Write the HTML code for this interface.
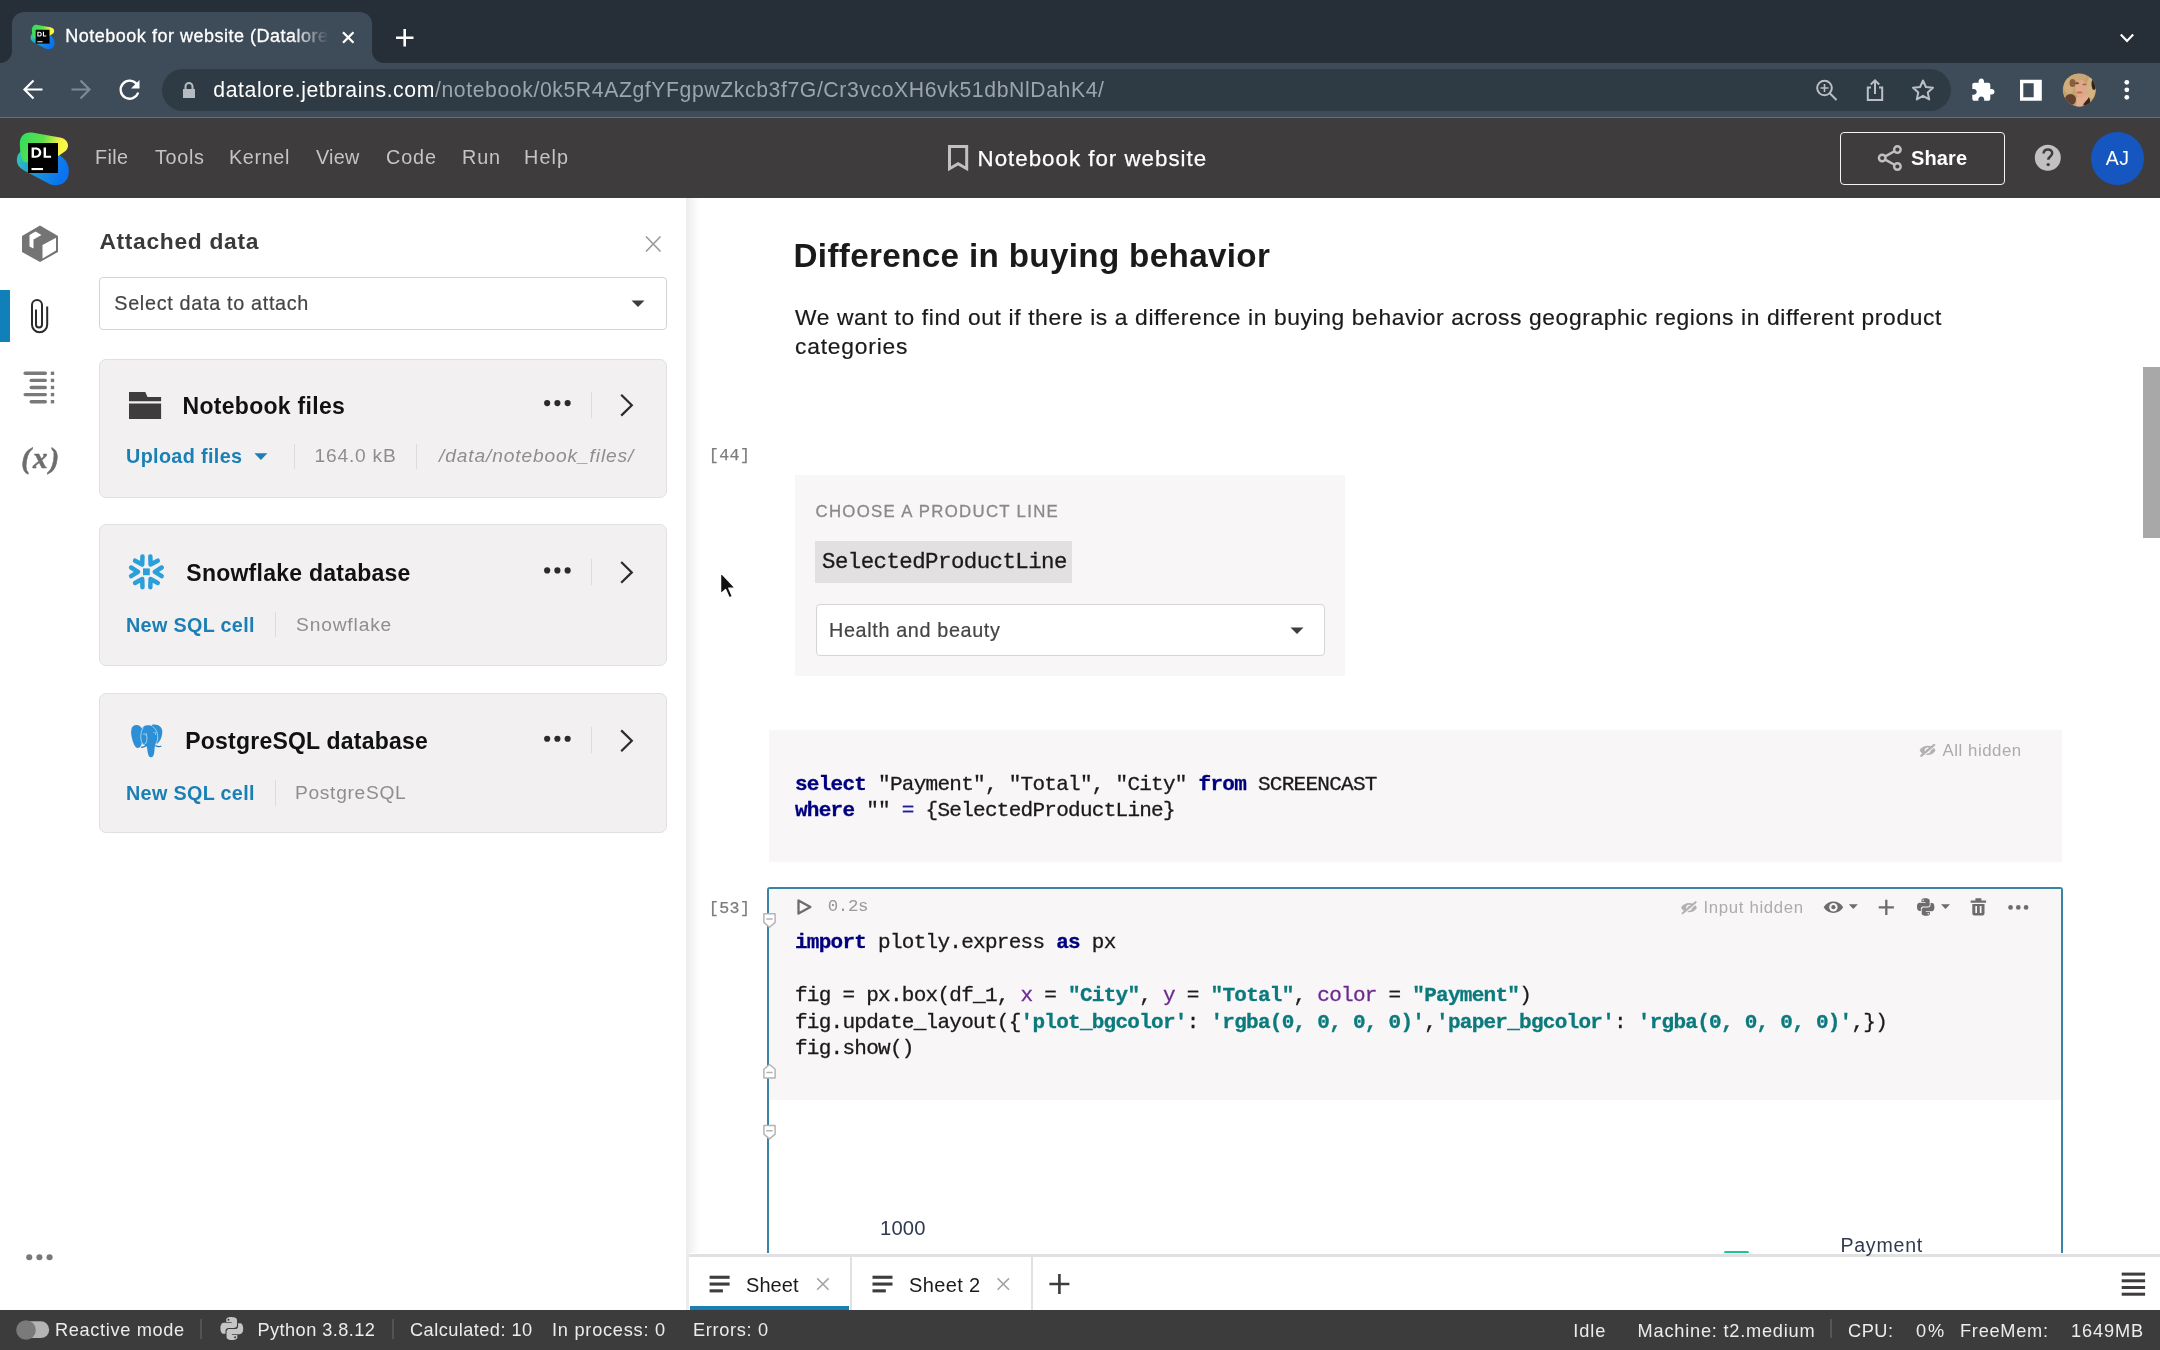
<!DOCTYPE html>
<html><head><meta charset="utf-8"><title>Notebook for website (Datalore)</title>
<style>
*{box-sizing:border-box;margin:0;padding:0}
html,body{width:2160px;height:1350px;overflow:hidden;background:#fff;font-family:"Liberation Sans",sans-serif}
#root{will-change:transform;position:relative;width:2160px;height:1350px;overflow:hidden;background:#fff}
.a{position:absolute}
.t{position:absolute;white-space:nowrap}
svg{position:absolute;overflow:visible}
</style></head><body><div id="root">
<!-- browser chrome -->
<div class="a" style="left:0;top:0;width:2160px;height:63px;background:#262f37"></div>
<div class="a" style="left:0;top:63px;width:2160px;height:55px;background:#3e4b58"></div>
<div class="a" style="left:0;top:116.6px;width:2160px;height:1.6px;background:#686e76"></div>
<div class="a" style="left:12px;top:12px;width:360px;height:52px;background:#3e4b58;border-radius:12px 12px 0 0"></div>
<div class="a" style="left:0;top:51px;width:12px;height:12px;background:radial-gradient(circle at 0 0,#262f37 11.5px,#3e4b58 12.5px)"></div>
<div class="a" style="left:372px;top:51px;width:12px;height:12px;background:radial-gradient(circle at 100% 0,#262f37 11.5px,#3e4b58 12.5px)"></div>
<div class="a" style="left:162px;top:69px;width:1789px;height:42px;background:#2f3b44;border-radius:21px"></div>
<!-- app header -->
<div class="a" style="left:0;top:118px;width:2160px;height:80px;background:#3e3c3d"></div>
<div class="a" style="left:1839.6px;top:131.8px;width:165.4px;height:52.8px;border:1.7px solid #f4f4f4;border-radius:4px"></div>
<div class="a" style="left:2090.8px;top:131.8px;width:52.8px;height:52.8px;border-radius:50%;background:#1556c0"></div>
<!-- left strip -->
<div class="a" style="left:0;top:290px;width:9.8px;height:52.4px;background:#1180b8"></div>
<!-- panel shadow divider -->
<div class="a" style="left:686px;top:198px;width:14px;height:1112px;background:linear-gradient(90deg,#ececec 0,#f6f6f6 50%,#fff 100%)"></div>
<!-- select data -->
<div class="a" style="left:99px;top:277px;width:568px;height:53px;border:1.5px solid #d4d3d4;border-radius:4px;background:#fff"></div>
<!-- cards -->
<div class="a" style="left:99px;top:359.2px;width:567.8px;height:138.6px;border:1.6px solid #e1e0e1;border-radius:7px;background:#f2f0f1"></div>
<div class="a" style="left:99px;top:524.3px;width:567.8px;height:141.3px;border:1.6px solid #e1e0e1;border-radius:7px;background:#f2f0f1"></div>
<div class="a" style="left:99px;top:692.6px;width:567.8px;height:140.9px;border:1.6px solid #e1e0e1;border-radius:7px;background:#f2f0f1"></div>
<!-- card dividers -->
<div class="a" style="left:591.2px;top:392px;width:1.3px;height:26px;background:#dddcdd"></div>
<div class="a" style="left:591.2px;top:559px;width:1.3px;height:26px;background:#dddcdd"></div>
<div class="a" style="left:591.2px;top:727.4px;width:1.3px;height:26px;background:#dddcdd"></div>
<div class="a" style="left:293.9px;top:443.5px;width:1.3px;height:25px;background:#dddcdd"></div>
<div class="a" style="left:416.1px;top:443.5px;width:1.3px;height:25px;background:#dddcdd"></div>
<div class="a" style="left:274.7px;top:611.7px;width:1.3px;height:25.7px;background:#dddcdd"></div>
<div class="a" style="left:274.7px;top:780px;width:1.3px;height:25.7px;background:#dddcdd"></div>
<!-- main: control box -->
<div class="a" style="left:795px;top:475px;width:550px;height:201px;background:#f8f6f7"></div>
<div class="a" style="left:815px;top:541px;width:257px;height:42.4px;background:#e2e0e1"></div>
<div class="a" style="left:815.8px;top:604px;width:509px;height:51.6px;border:1.5px solid #d6d5d6;border-radius:4px;background:#fff"></div>
<!-- sql cell -->
<div class="a" style="left:769px;top:730px;width:1293px;height:132px;background:#f8f6f7"></div>
<!-- python cell -->
<div class="a" style="left:767.3px;top:887.3px;width:1295.4px;height:400px;border:2.1px solid #3785a3;border-radius:3px 3px 0 0;background:#fff"></div>
<div class="a" style="left:769.4px;top:889.4px;width:1291.2px;height:210.6px;background:#f8f6f7"></div>
<!-- scrollbar -->
<div class="a" style="left:2143px;top:367px;width:17px;height:171px;background:#a9a8a9"></div>
<!-- plot bits -->
<div class="a" style="left:1724.2px;top:1250.6px;width:24.4px;height:3.4px;border-radius:1.5px 1.5px 0 0;background:#1cc597"></div>
<!-- sheet tabs -->
<div class="a" style="left:686px;top:1253px;width:1474px;height:57px;background:#fff"></div>
<div class="a" style="left:686px;top:1253.8px;width:1474px;height:3px;background:#e2e1e2"></div>
<div class="a" style="left:686px;top:1253px;width:3px;height:57px;background:#ececec"></div>
<div class="a" style="left:850.2px;top:1256px;width:2.2px;height:54px;background:#e2e1e2"></div>
<div class="a" style="left:1030.6px;top:1256px;width:2.2px;height:54px;background:#e2e1e2"></div>
<div class="a" style="left:690px;top:1306px;width:159px;height:4px;background:#1a7fb5"></div>
<!-- status bar -->
<div class="a" style="left:0;top:1310px;width:2160px;height:40px;background:#3d3c3d"></div>
<div class="a" style="left:200.4px;top:1318.5px;width:1.5px;height:20px;background:#545355"></div>
<div class="a" style="left:392.2px;top:1318.5px;width:1.5px;height:20px;background:#545355"></div>
<div class="a" style="left:1830px;top:1318.8px;width:1.6px;height:19.6px;background:#565557"></div>
<!--ICONS_START-->
<svg width="2160" height="1350" viewBox="0 0 2160 1350" style="left:0;top:0">
<defs>
<linearGradient id="gTop" x1="0" y1="0" x2="1" y2="0.25"><stop offset="0" stop-color="#2fdc5e"/><stop offset="0.5" stop-color="#5de04e"/><stop offset="0.85" stop-color="#f6f040"/><stop offset="1" stop-color="#fcf84a"/></linearGradient>
<linearGradient id="gBot" x1="0" y1="0" x2="1" y2="0.3"><stop offset="0" stop-color="#35c9b5"/><stop offset="0.45" stop-color="#1b9ad8"/><stop offset="1" stop-color="#0b73f0"/></linearGradient>
<g id="dl">
<path d="M17.5,156 C15.8,162 17.5,167 24,170.5 L50,184.3 C58,186.8 66,184 68.2,176 C70,168 67.5,161 62,157 L52,150 L27,150 C22,150 19,152 17.5,156 Z" fill="url(#gBot)"/>
<path d="M19.8,144 C19.5,136 25,131.5 32,132.6 L60,137.6 C68,139 70.5,147 65.5,151 L47,164 L24,162 C20.5,158 20,150 19.8,144 Z" fill="url(#gTop)"/>
<rect x="28" y="143" width="30" height="30" fill="#000"/>
<path d="M31.6,147.4h4.1c3.4,0 5.6,2.2 5.6,5.2 0,3 -2.2,5.2 -5.6,5.2h-4.1z M34,149.5v6.2h1.7c1.9,0 3.2,-1.2 3.2,-3.1 0,-1.9 -1.3,-3.1 -3.2,-3.1z M43.6,147.4h2.4v8.3h5.1v2.1h-7.5z" fill="#fff" fill-rule="evenodd"/>
<rect x="31.5" y="168" width="11.5" height="2.1" fill="#fff"/>
</g>
<g id="dots3"><circle cx="-8" cy="0" r="2.4"/><circle cx="0" cy="0" r="2.4"/><circle cx="8" cy="0" r="2.4"/></g>
<path id="py" d="M-0.2,-8.8c-4.3,0 -4,1.9 -4,1.9v2h4.1v0.6h-5.8s-2.8,-0.3 -2.8,4.1c0,4.4 2.4,4.2 2.4,4.2h1.5v-2s-0.1,-2.4 2.4,-2.4h4.1s2.3,0 2.3,-2.2v-3.7s0.4,-2.5 -4.2,-2.5z M-2.5,-7.5a0.75,0.75 0 1 1 0,1.5a0.75,0.75 0 1 1 0,-1.5z M0.2,8.8c4.3,0 4,-1.9 4,-1.9v-2h-4.1v-0.6h5.8s2.8,0.3 2.8,-4.1c0,-4.4 -2.4,-4.2 -2.4,-4.2h-1.5v2s0.1,2.4 -2.4,2.4h-4.1s-2.3,0 -2.3,2.2v3.7s-0.4,2.5 4.2,2.5z M2.5,7.5a0.75,0.75 0 1 1 0,-1.5a0.75,0.75 0 1 1 0,1.5z" fill-rule="evenodd"/>
</defs>
<!-- ===== browser chrome icons ===== -->
<use href="#dl" transform="translate(30.6,24.2) scale(0.462) translate(-17,-131)"/>
<g stroke="#fff" stroke-width="2.2" fill="none" stroke-linecap="butt">
<path d="M343,32.3 L353.5,42.8 M353.5,32.3 L343,42.8" stroke-width="2.3"/>
<path d="M396,37.7 H413.5 M404.7,29 V46.5" stroke-width="2.6"/>
<path d="M2120.8,34.6 L2127,40.9 L2133.2,34.6" stroke-width="2.2"/>
<path d="M42.5,89.5 H25 M33.5,80.5 L24.5,89.5 L33.5,98.5" />
<path d="M71.5,89.5 H89 M80.5,80.5 L89.5,89.5 L80.5,98.5" stroke="#7d8a95"/>
<path d="M137,84.5 A9,9 0 1 0 138.2,92.5" stroke-width="2.3"/>
</g>
<path d="M139.5,80 V88.5 H131 Z" fill="#fff"/>
<!-- lock -->
<path d="M183,89 h12 v9 h-12z" fill="#b5bbc1"/>
<path d="M185.5,89 v-2.5 a3.5,3.5 0 0 1 7,0 V89" fill="none" stroke="#b5bbc1" stroke-width="2"/>
<!-- zoom -->
<g stroke="#b9bfc5" stroke-width="2" fill="none">
<circle cx="1824.5" cy="88" r="7.3"/><path d="M1830,93.5 L1836.5,100"/><path d="M1820.5,88 h8 M1824.5,84 v8" stroke-width="1.6"/>
<!-- share -->
<path d="M1871,87.5 h-3.2 v12.5 h14.4 v-12.5 h-3.2"/><path d="M1875,94 V80.5 M1870.8,84.5 L1875,80.3 L1879.2,84.5"/>
<!-- star -->
<path d="M1923,80.5 L1925.9,87 L1933,87.7 L1927.7,92.4 L1929.2,99.4 L1923,95.8 L1916.8,99.4 L1918.3,92.4 L1913,87.7 L1920.1,87 Z" stroke-linejoin="round"/>
</g>
<!-- puzzle -->
<path transform="translate(1.3,-0.4)" d="M1990.5,89.5h-1.5v-4.2c0,-1.2 -0.9,-2.1 -2.1,-2.1h-4.2v-1.5c0,-1.5 -1.2,-2.7 -2.7,-2.7s-2.7,1.2 -2.7,2.7v1.5h-4.2c-1.2,0 -2.1,0.9 -2.1,2.1v4h1.5c1.6,0 2.9,1.3 2.9,2.9s-1.3,2.9 -2.9,2.9h-1.5v4c0,1.2 0.9,2.1 2.1,2.1h4v-1.5c0,-1.6 1.3,-2.9 2.9,-2.9s2.9,1.3 2.9,2.9v1.5h4c1.2,0 2.1,-0.9 2.1,-2.1v-4.2h1.5c1.5,0 2.7,-1.2 2.7,-2.7s-1.2,-2.7 -2.7,-2.7z" fill="#fff"/>
<!-- side panel -->
<path d="M2020,79.8h21.8v21h-21.8z M2023.3,83.3v14h10.4v-14z" fill="#fff" fill-rule="evenodd"/>
<!-- avatar -->
<clipPath id="avc"><circle cx="2079.3" cy="90" r="16.6"/></clipPath>
<g clip-path="url(#avc)">
<circle cx="2079.3" cy="90" r="17" fill="#c3a06c"/>
<ellipse cx="2069" cy="86" rx="5" ry="8" fill="#cfae7c"/>
<ellipse cx="2091" cy="88" rx="4.5" ry="11" fill="#d2b482"/>
<ellipse cx="2078" cy="77.5" rx="9" ry="4" fill="#c9a777"/>
<ellipse cx="2094" cy="84" rx="2.5" ry="6" fill="#2c241e"/>
<ellipse cx="2072.5" cy="83" rx="3" ry="4" fill="#8a5e40"/>
<ellipse cx="2081.2" cy="88.8" rx="6.2" ry="9" fill="#dfa88b"/>
<ellipse cx="2077" cy="83.2" rx="2.2" ry="1" fill="#7a4a30"/>
<ellipse cx="2084.5" cy="84.4" rx="2.2" ry="0.9" fill="#9a6a50"/>
<ellipse cx="2079.5" cy="92.6" rx="3.2" ry="1" fill="#c26a58"/>
<ellipse cx="2070.5" cy="99.5" rx="5.5" ry="5.5" fill="#63402f"/>
<ellipse cx="2086.5" cy="101.5" rx="3.6" ry="5.5" fill="#3a2318"/>
<path d="M2077,96 C2080,99 2085,97 2087,93 L2089,97 C2087,101 2083,103 2081,108 L2076,108 C2077,103 2076,100 2077,96Z" fill="#e2ad91"/>
<path d="M2063,96 C2066,103 2072,107 2082,107.5 L2082,110 L2060,110Z" fill="#e9e4df"/>
</g>
<!-- kebab -->
<g fill="#fff"><circle cx="2126.8" cy="82.3" r="2.4"/><circle cx="2126.8" cy="89.8" r="2.4"/><circle cx="2126.8" cy="97.3" r="2.4"/></g>
<!-- ===== app header ===== -->
<use href="#dl"/>
<path d="M949.5,146.5 h17.2 v22.2 l-8.6,-5 l-8.6,5 z" fill="none" stroke="#c2c1c2" stroke-width="3"/>
<g stroke="#c2c1c2" stroke-width="2.4" fill="none"><circle cx="1897.4" cy="149.6" r="3.3"/><circle cx="1882.2" cy="158" r="3.3"/><circle cx="1897.4" cy="166.5" r="3.3"/><path d="M1885.2,156.4 L1894.4,151.3 M1885.2,159.6 L1894.4,164.8"/></g>
<circle cx="2047.8" cy="157.8" r="13" fill="#c2c1c2"/>
<path d="M2043.6,153.6 c0,-2.6 1.9,-4.2 4.3,-4.2 c2.5,0 4.3,1.6 4.3,3.8 c0,3.2 -3.9,3.4 -3.9,6.6" fill="none" stroke="#3e3c3d" stroke-width="2.5"/><circle cx="2048.2" cy="164.6" r="1.7" fill="#3e3c3d"/>
<!-- ===== left strip ===== -->
<path d="M40,225.5 L58,236 V252 L40,262 L22,252 V236 Z" fill="#757475"/>
<path d="M42.5,245 L56,237.8 V250.6 L42.5,258.5 Z" fill="#fff"/>
<path d="M35.5,231.5 L41.5,235 L33.5,239.5 V248.5 L29.5,246.5 V235 Z" fill="#fff"/>
<path d="M36,309.5 V324.5 a3,3 0 0 0 6,0 V305 a5,5 0 0 0 -10,0 V324.7 a7.6,7.6 0 0 0 15.2,0 V306.5" fill="none" stroke="#2b2b2b" stroke-width="2"/>
<g fill="#7a797a"><rect x="23.5" y="371.6" width="23.5" height="3.4" rx="1.7"/><rect x="29.5" y="378.7" width="17.5" height="3.4" rx="1.7"/><rect x="29.5" y="385.8" width="17.5" height="3.4" rx="1.7"/><rect x="23.5" y="392.9" width="23.5" height="3.4" rx="1.7"/><rect x="29.5" y="400" width="17.5" height="3.4" rx="1.7"/>
<rect x="50.8" y="371.6" width="3.4" height="3.4"/><rect x="50.8" y="378.7" width="3.4" height="3.4"/><rect x="50.8" y="385.8" width="3.4" height="3.4"/><rect x="50.8" y="392.9" width="3.4" height="3.4"/><rect x="50.8" y="400" width="3.4" height="3.4"/></g>
<use href="#dots3" transform="translate(39.4,1257.3) scale(1.27)" fill="#7a797a"/>
<!-- ===== panel ===== -->
<path d="M646,236.5 L660.5,251.5 M660.5,236.5 L646,251.5" stroke="#9a999a" stroke-width="1.6" fill="none"/>
<path d="M631.5,300.5 h13 l-6.5,6.5z" fill="#3e3c3d"/>
<path d="M129,392 h16.3 l2.2,5 h13.6 v4.2 h-32.1z M129,403.5 h32.1 v15.4 h-32.1z" fill="#3e3c3d"/>
<g fill="#2b2b2b"><use href="#dots3" transform="translate(557.4,403.1) scale(1.28)"/><use href="#dots3" transform="translate(557.4,570.4) scale(1.28)"/><use href="#dots3" transform="translate(557.4,738.8) scale(1.28)"/></g>
<g fill="none" stroke="#2b2b2b" stroke-width="2.2"><path d="M621.2,394.8 L631.8,405.2 L621.2,415.6"/><path d="M621.2,562 L631.8,572.4 L621.2,582.8"/><path d="M621.2,730.4 L631.8,740.8 L621.2,751.2"/></g>
<path d="M254.4,453.2 h13 l-6.5,6.8z" fill="#1a7fb5"/>
<!-- snowflake -->
<g id="snow" transform="translate(146.4,571.8)" stroke="#2b9fd9" stroke-width="4.5" stroke-linecap="round" stroke-linejoin="round" fill="none">
<rect x="-3.4" y="-3.4" width="6.8" height="6.8" fill="#2b9fd9" stroke="none"/>
<g id="sa"><path d="M15.3,-4.3 L8.4,0 L15.3,4.3"/></g>
<use href="#sa" transform="rotate(60)"/><use href="#sa" transform="rotate(120)"/><use href="#sa" transform="rotate(180)"/><use href="#sa" transform="rotate(240)"/><use href="#sa" transform="rotate(300)"/>
</g>
<!-- postgres elephant -->
<g fill="#2d8fd5">
<path d="M136.5,725 C131,725 130.3,731 131.8,737.5 C133.3,743.5 135,748 137.8,748 C140.5,748 142.5,744 142.5,738 V730 C141.5,727 139.5,725 136.5,725 Z"/>
<path d="M152,724.8 C158,723.5 162.6,727 162.3,732.5 C162,737.5 160,741.5 157,744 L153,735 Z"/>
<path d="M147.5,725.2 C142,725.2 139.6,731 140,737 C140.4,741.5 142,744.3 145,745.3 C147,746 147.2,748 147.5,751 C148,755 149,757.3 151,757.3 C153,757.3 154.1,755 154.4,751 C154.7,747 155,744.5 156.5,742.2 C158.3,739.5 158.8,735 157.6,731 C156.5,727.3 152.5,725.2 147.5,725.2 Z"/>
</g>
<g fill="none" stroke="#9ad6f7" stroke-width="1"><path d="M143.5,727.5 C140.5,731 140,738 142,743.5 C143.5,744.8 145,744.8 146,743 C147.3,740 147.3,735 145.8,733"/><path d="M152.5,726.5 C156.5,729 158.3,734 157.6,739 C157.2,741.5 156.3,743.5 155.5,744.5"/><path d="M153.5,732.5 C155,731.5 156.5,733 155.5,735"/><path d="M142.8,734.5 C143.8,733.2 145.5,733.8 145.3,735.5"/></g>
<g stroke="#2a78b5" stroke-width="1.3" fill="none"><path d="M141,747.3 C143,747.3 145,746.5 146.3,745.2"/><path d="M155.5,745.5 C157.5,746.8 159.5,746.8 161.3,746"/></g>
<!-- ===== main ===== -->
<path d="M1290.5,627.5 h13 l-6.5,6.5z" fill="#3e3c3d"/>
<!-- mouse cursor -->
<path d="M720.6,572.5 V594 L725.6,589.4 L729.2,597.8 L732.4,596.4 L728.8,588.2 L735.2,588 Z" fill="#111" stroke="#fff" stroke-width="1.3" stroke-linejoin="round"/>
<!-- eye-slash: All hidden / Input hidden -->
<g id="es1" transform="translate(1927.6,750.4)"><path d="M-8,0 C-4.5,-6.2 4.5,-6.2 8,0 C4.5,6.2 -4.5,6.2 -8,0Z" fill="#b3b2b3"/><circle r="2.9" fill="#f8f6f7"/><circle r="1.4" fill="#b3b2b3"/><path d="M-5.2,6.2 L8,-4.9" stroke="#f8f6f7" stroke-width="1.6" fill="none"/><path d="M-6.4,5.5 L6.6,-5.5" stroke="#b3b2b3" stroke-width="2.1" fill="none" stroke-linecap="round"/></g>
<use href="#es1" transform="translate(-238.6,157.3)"/>
<!-- run -->
<path d="M798.5,900.4 L810.4,907 L798.5,913.6 Z" fill="none" stroke="#6e6d6e" stroke-width="2.3" stroke-linejoin="round"/>
<!-- eye -->
<g transform="translate(1833.4,907.2)"><path d="M-9.8,0 C-5.5,-7.6 5.5,-7.6 9.8,0 C5.5,7.6 -5.5,7.6 -9.8,0Z" fill="#6e6d6e"/><circle r="4.2" fill="#f8f6f7"/><circle r="2.1" fill="#6e6d6e"/></g>
<path d="M1848.8,904.3 h9 l-4.5,4.8z M1941,904.3 h9 l-4.5,4.8z" fill="#6e6d6e"/>
<path d="M1878.7,907.4 h15.2 M1886.3,899.8 v15.2" stroke="#6e6d6e" stroke-width="2.3" fill="none"/>
<use href="#py" transform="translate(1925.7,907)" fill="#6e6d6e"/>
<path d="M1970.7,900.5 h15.4 v2.2 h-15.4z M1975.4,898.3 h6 v2.2 h-6z M1972.3,904 h12.2 v9.4 a2,2 0 0 1 -2,2 h-8.2 a2,2 0 0 1 -2,-2z M1975.3,906 v7 h1.7 v-7z M1979.8,906 v7 h1.7 v-7z" fill="#6e6d6e" fill-rule="evenodd"/>
<use href="#dots3" transform="translate(2018.3,907.4) scale(0.97)" fill="#6e6d6e"/>
<!-- fold markers -->
<g fill="#fff" stroke="#b5b4b5" stroke-width="1.5" stroke-linejoin="round"><path d="M763.9,913.7 h11.2 v8.7 l-5.6,4.8 l-5.6,-4.8z"/><path d="M763.9,1078 h11.2 v-8.7 l-5.6,-4.8 l-5.6,4.8z"/><path d="M763.9,1125.4 h11.2 v8.7 l-5.6,4.8 l-5.6,-4.8z"/></g>
<path d="M766.3,919.1 h6.4 M766.3,1072.6 h6.4 M766.3,1130.8 h6.4" stroke="#b5b4b5" stroke-width="1.5"/>
<!-- ===== sheet tabs ===== -->
<g fill="#3e3c3d"><rect x="709.6" y="1275.7" width="20" height="3.1"/><rect x="709.6" y="1282.5" width="20" height="3.1"/><rect x="709.6" y="1289.3" width="13.3" height="3.1"/>
<rect x="872.5" y="1275.7" width="20" height="3.1"/><rect x="872.5" y="1282.5" width="20" height="3.1"/><rect x="872.5" y="1289.3" width="13.3" height="3.1"/>
<rect x="2121.7" y="1272.6" width="23.4" height="3"/><rect x="2121.7" y="1279.3" width="23.4" height="3"/><rect x="2121.7" y="1286" width="23.4" height="3"/><rect x="2121.7" y="1292.7" width="23.4" height="3"/></g>
<g stroke="#a3a2a3" stroke-width="1.5" fill="none"><path d="M817.2,1278.4 L828.6,1289.8 M828.6,1278.4 L817.2,1289.8"/><path d="M997.6,1278.4 L1009,1289.8 M1009,1278.4 L997.6,1289.8"/></g>
<path d="M1049.4,1284 h20 M1059.4,1274 v20" stroke="#3e3c3d" stroke-width="2.6" fill="none"/>
<!-- ===== status bar ===== -->
<rect x="20" y="1321.3" width="29.2" height="16.8" rx="8.4" fill="#b5b4b5"/><circle cx="26" cy="1330" r="9.8" fill="#7b7a7b"/>
<use href="#py" transform="translate(231.8,1328.5) scale(1.31)" fill="#c6c5c6"/>
</svg>

<!--ICONS_END-->
<span class="t" id="tabtitle" style="left:65.30px;top:25.36px;font:400 18px/23px 'Liberation Sans',sans-serif;color:#fff;letter-spacing:0.503px;-webkit-text-stroke:0.3px;-webkit-mask-image:linear-gradient(90deg,#000 86%,transparent 100%);mask-image:linear-gradient(90deg,#000 86%,transparent 100%);">Notebook for website (Datalore</span>
<span class="t" id="url" style="left:213.30px;top:75.55px;font:400 21.2px/28px 'Liberation Sans',sans-serif;color:#fff;letter-spacing:0.600px;">datalore.jetbrains.com<span style="color:#9ba5ae">/notebook/0k5R4AZgfYFgpwZkcb3f7G/Cr3vcoXH6vk51dbNlDahK4/</span></span>
<span class="t" id="m1" style="left:95.00px;top:144.00px;font:400 19.8px/26px 'Liberation Sans',sans-serif;color:#c5c4c5;letter-spacing:0.371px;">File</span>
<span class="t" id="m2" style="left:155.00px;top:144.00px;font:400 19.8px/26px 'Liberation Sans',sans-serif;color:#c5c4c5;letter-spacing:0.676px;">Tools</span>
<span class="t" id="m3" style="left:229.00px;top:144.00px;font:400 19.8px/26px 'Liberation Sans',sans-serif;color:#c5c4c5;letter-spacing:0.641px;">Kernel</span>
<span class="t" id="m4" style="left:316.00px;top:144.00px;font:400 19.8px/26px 'Liberation Sans',sans-serif;color:#c5c4c5;letter-spacing:0.254px;">View</span>
<span class="t" id="m5" style="left:386.00px;top:144.00px;font:400 19.8px/26px 'Liberation Sans',sans-serif;color:#c5c4c5;letter-spacing:0.904px;">Code</span>
<span class="t" id="m6" style="left:462.00px;top:144.00px;font:400 19.8px/26px 'Liberation Sans',sans-serif;color:#c5c4c5;letter-spacing:0.856px;">Run</span>
<span class="t" id="m7" style="left:524.00px;top:144.00px;font:400 19.8px/26px 'Liberation Sans',sans-serif;color:#c5c4c5;letter-spacing:1.106px;">Help</span>
<span class="t" id="nbtitle" style="left:977.60px;top:144.47px;font:400 22.3px/29px 'Liberation Sans',sans-serif;color:#fff;letter-spacing:1.002px;-webkit-text-stroke:0.25px;">Notebook for website</span>
<span class="t" id="share" style="left:1911.00px;top:145.00px;font:700 20px/26px 'Liberation Sans',sans-serif;color:#fff;letter-spacing:0.132px;">Share</span>
<span class="t" id="aj" style="left:2105.70px;top:146.10px;font:400 19.5px/25px 'Liberation Sans',sans-serif;color:#fff;letter-spacing:0.584px;">AJ</span>
<span class="t" id="att" style="left:99.40px;top:226.40px;font:700 22.8px/30px 'Liberation Sans',sans-serif;color:#3a3a3a;letter-spacing:0.694px;">Attached data</span>
<span class="t" id="seldata" style="left:114.30px;top:290.20px;font:400 19.8px/26px 'Liberation Sans',sans-serif;color:#444;letter-spacing:0.686px;-webkit-text-stroke:0.2px;">Select data to attach</span>
<span class="t" id="c1t" style="left:182.50px;top:391.10px;font:700 23px/30px 'Liberation Sans',sans-serif;color:#111;letter-spacing:0.294px;">Notebook files</span>
<span class="t" id="c1a" style="left:126.00px;top:442.54px;font:700 19.8px/26px 'Liberation Sans',sans-serif;color:#1a7fb5;letter-spacing:0.353px;">Upload files</span>
<span class="t" id="c1b" style="left:314.50px;top:443.05px;font:400 19.2px/25px 'Liberation Sans',sans-serif;color:#8f8e8f;letter-spacing:0.794px;">164.0 kB</span>
<span class="t" id="c1c" style="left:439.00px;top:443.05px;font:400 19.2px/25px 'Liberation Sans',sans-serif;color:#8f8e8f;letter-spacing:0.863px;font-style:italic;">/data/notebook_files/</span>
<span class="t" id="c2t" style="left:186.30px;top:557.80px;font:700 23px/30px 'Liberation Sans',sans-serif;color:#111;letter-spacing:0.249px;">Snowflake database</span>
<span class="t" id="c2a" style="left:126.00px;top:611.54px;font:700 19.8px/26px 'Liberation Sans',sans-serif;color:#1a7fb5;letter-spacing:0.321px;">New SQL cell</span>
<span class="t" id="c2b" style="left:296.00px;top:612.05px;font:400 19.2px/25px 'Liberation Sans',sans-serif;color:#8f8e8f;letter-spacing:0.842px;">Snowflake</span>
<span class="t" id="c3t" style="left:185.30px;top:726.10px;font:700 23px/30px 'Liberation Sans',sans-serif;color:#111;letter-spacing:0.215px;">PostgreSQL database</span>
<span class="t" id="c3a" style="left:126.00px;top:779.84px;font:700 19.8px/26px 'Liberation Sans',sans-serif;color:#1a7fb5;letter-spacing:0.321px;">New SQL cell</span>
<span class="t" id="c3b" style="left:295.00px;top:780.35px;font:400 19.2px/25px 'Liberation Sans',sans-serif;color:#8f8e8f;letter-spacing:0.683px;">PostgreSQL</span>
<span class="t" id="xvar" style="left:21.20px;top:439.00px;font:700 29px/38px 'Liberation Sans',sans-serif;color:#6e6d6e;letter-spacing:2.070px;font-family:'Liberation Serif',serif;font-style:italic;-webkit-text-stroke:0.5px;">(x)</span>
<span class="t" id="h1" style="left:793.50px;top:234.20px;font:700 33.2px/43px 'Liberation Sans',sans-serif;color:#1a1a1a;letter-spacing:0.352px;">Difference in buying behavior</span>
<span class="t" id="p1" style="left:795.00px;top:301.90px;font:400 22.8px/30px 'Liberation Sans',sans-serif;color:#1a1a1a;letter-spacing:0.623px;-webkit-text-stroke:0.2px;">We want to find out if there is a difference in buying behavior across geographic regions in different product</span>
<span class="t" id="p2" style="left:795.00px;top:330.60px;font:400 22.8px/30px 'Liberation Sans',sans-serif;color:#1a1a1a;letter-spacing:0.802px;-webkit-text-stroke:0.2px;">categories</span>
<span class="t" id="n44" style="left:708.80px;top:444.98px;font:400 16.6px/22px 'Liberation Mono',monospace;color:#7d7c7d;letter-spacing:0.439px;-webkit-text-stroke:0.25px;">[44]</span>
<span class="t" id="n53" style="left:708.80px;top:897.98px;font:400 16.6px/22px 'Liberation Mono',monospace;color:#7d7c7d;letter-spacing:0.439px;-webkit-text-stroke:0.25px;">[53]</span>
<span class="t" id="choose" style="left:815.50px;top:500.68px;font:400 16.8px/22px 'Liberation Sans',sans-serif;color:#8a898a;letter-spacing:1.313px;-webkit-text-stroke:0.3px;">CHOOSE A PRODUCT LINE</span>
<span class="t" id="chip" style="left:822.00px;top:548.10px;font:400 22.4px/29px 'Liberation Mono',monospace;color:#1a1a1a;letter-spacing:-0.548px;-webkit-text-stroke:0.3px;">SelectedProductLine</span>
<span class="t" id="hb" style="left:829.00px;top:617.40px;font:400 19.8px/26px 'Liberation Sans',sans-serif;color:#444;letter-spacing:0.644px;-webkit-text-stroke:0.2px;">Health and beauty</span>
<span class="t" id="allh" style="left:1942.60px;top:739.98px;font:400 16.8px/22px 'Liberation Sans',sans-serif;color:#adacad;letter-spacing:0.535px;">All hidden</span>
<span class="t" id="inh" style="left:1703.40px;top:896.78px;font:400 16.8px/22px 'Liberation Sans',sans-serif;color:#adacad;letter-spacing:0.667px;">Input hidden</span>
<span class="t" id="t02" style="left:827.70px;top:895.17px;font:400 17.4px/23px 'Liberation Mono',monospace;color:#9a999a;letter-spacing:-0.338px;">0.2s</span>
<span class="t" id="sql1" style="left:795.00px;top:770.91px;font:400 21.0px/27px 'Liberation Mono',monospace;color:#1a1a1a;letter-spacing:-0.732px;-webkit-text-stroke:0.3px;"><b style="color:#00007f;font-weight:700">select</b> "Payment", "Total", "City" <b style="color:#00007f;font-weight:700">from</b> SCREENCAST</span>
<span class="t" id="sql2" style="left:795.00px;top:797.11px;font:400 21.0px/27px 'Liberation Mono',monospace;color:#1a1a1a;letter-spacing:-0.732px;-webkit-text-stroke:0.3px;"><b style="color:#00007f;font-weight:700">where</b> "" <span style="color:#1d1d9c">=</span> {SelectedProductLine}</span>
<span class="t" id="py1" style="left:795.00px;top:929.31px;font:400 21.0px/27px 'Liberation Mono',monospace;color:#1a1a1a;letter-spacing:-0.732px;-webkit-text-stroke:0.3px;"><b style="color:#00007f;font-weight:700">import</b> plotly.express <b style="color:#00007f;font-weight:700">as</b> px</span>
<span class="t" id="py2" style="left:795.00px;top:982.01px;font:400 21.0px/27px 'Liberation Mono',monospace;color:#1a1a1a;letter-spacing:-0.732px;-webkit-text-stroke:0.3px;">fig = px.box(df_1, <span style="color:#6a2a91">x</span> = <b style="color:#0a7a7d;font-weight:700">"City"</b>, <span style="color:#6a2a91">y</span> = <b style="color:#0a7a7d;font-weight:700">"Total"</b>, <span style="color:#6a2a91">color</span> = <b style="color:#0a7a7d;font-weight:700">"Payment"</b>)</span>
<span class="t" id="py3" style="left:795.00px;top:1008.51px;font:400 21.0px/27px 'Liberation Mono',monospace;color:#1a1a1a;letter-spacing:-0.732px;-webkit-text-stroke:0.3px;">fig.update_layout({<b style="color:#0a7a7d;font-weight:700">'plot_bgcolor'</b>: <b style="color:#0a7a7d;font-weight:700">'rgba(0, 0, 0, 0)'</b>,<b style="color:#0a7a7d;font-weight:700">'paper_bgcolor'</b>: <b style="color:#0a7a7d;font-weight:700">'rgba(0, 0, 0, 0)'</b>,})</span>
<span class="t" id="py4" style="left:795.00px;top:1034.91px;font:400 21.0px/27px 'Liberation Mono',monospace;color:#1a1a1a;letter-spacing:-0.732px;-webkit-text-stroke:0.3px;">fig.show()</span>
<span class="t" id="k1000" style="left:880.00px;top:1215.10px;font:400 20.2px/26px 'Liberation Sans',sans-serif;color:#2f3a4f;letter-spacing:0.206px;">1000</span>
<span class="t" id="pay" style="left:1840.40px;top:1232.61px;font:400 19.6px/25px 'Liberation Sans',sans-serif;color:#2f3a4f;letter-spacing:0.752px;">Payment</span>
<span class="t" id="sh1" style="left:746.00px;top:1271.50px;font:400 20px/26px 'Liberation Sans',sans-serif;color:#1a1a1a;letter-spacing:0.070px;">Sheet</span>
<span class="t" id="sh2" style="left:909.00px;top:1271.50px;font:400 20px/26px 'Liberation Sans',sans-serif;color:#1a1a1a;letter-spacing:0.361px;">Sheet 2</span>
<span class="t" id="s1" style="left:55.00px;top:1318.00px;font:400 18.2px/24px 'Liberation Sans',sans-serif;color:#ececec;letter-spacing:0.650px;">Reactive mode</span>
<span class="t" id="s2" style="left:257.50px;top:1318.00px;font:400 18.2px/24px 'Liberation Sans',sans-serif;color:#ececec;letter-spacing:0.430px;">Python 3.8.12</span>
<span class="t" id="s3" style="left:410.00px;top:1318.00px;font:400 18.2px/24px 'Liberation Sans',sans-serif;color:#ececec;letter-spacing:0.449px;">Calculated: 10</span>
<span class="t" id="s4" style="left:552.00px;top:1318.00px;font:400 18.2px/24px 'Liberation Sans',sans-serif;color:#ececec;letter-spacing:0.748px;">In process: 0</span>
<span class="t" id="s5" style="left:693.00px;top:1318.00px;font:400 18.2px/24px 'Liberation Sans',sans-serif;color:#ececec;letter-spacing:0.672px;">Errors: 0</span>
<span class="t" id="s6" style="left:1573.30px;top:1318.80px;font:400 18.2px/24px 'Liberation Sans',sans-serif;color:#ececec;letter-spacing:0.894px;">Idle</span>
<span class="t" id="s7" style="left:1637.60px;top:1318.80px;font:400 18.2px/24px 'Liberation Sans',sans-serif;color:#ececec;letter-spacing:0.781px;">Machine: t2.medium</span>
<span class="t" id="s8" style="left:1848.00px;top:1318.80px;font:400 18.2px/24px 'Liberation Sans',sans-serif;color:#ececec;letter-spacing:0.531px;">CPU:</span>
<span class="t" id="s9" style="left:1916.00px;top:1318.80px;font:400 18.2px/24px 'Liberation Sans',sans-serif;color:#ececec;letter-spacing:1.879px;">0%</span>
<span class="t" id="s10" style="left:1960.00px;top:1318.80px;font:400 18.2px/24px 'Liberation Sans',sans-serif;color:#ececec;letter-spacing:0.741px;">FreeMem:</span>
<span class="t" id="s11" style="left:2071.00px;top:1318.80px;font:400 18.2px/24px 'Liberation Sans',sans-serif;color:#ececec;letter-spacing:0.877px;">1649MB</span>
</div></body></html>
